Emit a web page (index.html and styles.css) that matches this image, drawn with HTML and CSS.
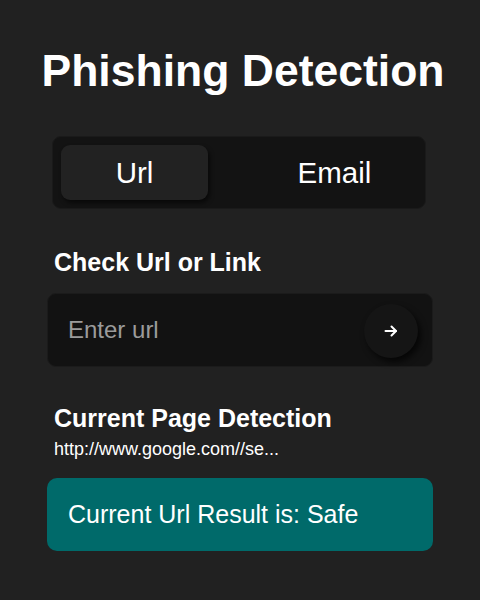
FILE: index.html
```html
<!DOCTYPE html>
<html lang="en">
<head>
<meta charset="utf-8">
<title>Phishing Detection</title>
<link rel="stylesheet" href="styles.css">
</head>
<body>
<main class="app">
  <h1 class="title">Phishing Detection</h1>
  <div class="tabs">
    <button class="tab tab-active">Url</button>
    <button class="tab">Email</button>
  </div>
  <h2 class="heading heading-check">Check Url or Link</h2>
  <div class="input-box">
    <span class="placeholder">Enter url</span>
    <button class="go">
      <svg width="16" height="16" viewBox="0 0 16 16" fill="none" stroke="#fff" stroke-width="2" stroke-linecap="round" stroke-linejoin="round"><path d="M2.5 8h10.5"/><path d="M8.5 3.5 13 8l-4.5 4.5"/></svg>
    </button>
  </div>
  <h2 class="heading heading-current">Current Page Detection</h2>
  <p class="current-url">http://www.google.com//se...</p>
  <div class="result">Current Url Result is: Safe</div>
</main>
</body>
</html>
```
FILE: styles.css
```css
html, body {
  margin: 0;
  padding: 0;
  background: #212121;
}
body {
  font-family: "Liberation Sans", Arial, sans-serif;
  color: #ffffff;
}
.app {
  display: flex;
  flex-direction: column;
  padding: 46px 47px 0 47px;
}
.title {
  margin: 0 -47px 40px -47px;
  font-size: 44.5px;
  line-height: 50px;
  font-weight: 700;
  text-align: center;
  white-space: nowrap;
  padding-left: 6px;
}
.tabs {
  margin: 0 7px 0 5px;
  height: 73px;
  box-sizing: border-box;
  padding: 9px;
  background: #131313;
  border: 1px solid #1a1a1a;
  border-radius: 9px;
  display: flex;
  gap: 53px;
}
.tab {
  width: 147px;
  height: 55px;
  margin-top: -1px;
  border: none;
  background: transparent;
  color: #fff;
  font-family: "Liberation Sans", Arial, sans-serif;
  font-size: 29.5px;
  border-radius: 9px;
  padding: 0;
}
.tab-active {
  background: #222222;
  box-shadow: 2px 3px 4px rgba(0, 0, 0, 0.55);
  margin-left: -1px;
}
.heading {
  margin: 0;
  font-size: 25px;
  line-height: 30px;
  font-weight: 700;
  padding-left: 7px;
}
.heading-check {
  margin-top: 38px;
}
.input-box {
  margin-top: 16px;
  height: 74px;
  box-sizing: border-box;
  background: #121212;
  border: 1px solid #1b1b1b;
  border-radius: 9px;
  display: flex;
  align-items: center;
  justify-content: space-between;
  padding: 0 14px 0 20px;
}
.placeholder {
  font-size: 24px;
  color: #9b9b9b;
}
.go {
  width: 54px;
  height: 54px;
  border-radius: 50%;
  border: none;
  background: #151515;
  box-shadow: 3px 4px 6px rgba(0, 0, 0, 0.7);
  display: flex;
  align-items: center;
  justify-content: center;
  padding: 0;
  margin-top: 2px;
}
.heading-current {
  margin-top: 36px;
}
.current-url {
  margin: 5px 0 0 0;
  padding-left: 7px;
  font-size: 18px;
  line-height: 22px;
}
.result {
  margin-top: 18px;
  height: 73px;
  box-sizing: border-box;
  background: #006a6a;
  border-radius: 10px;
  display: flex;
  align-items: center;
  padding-left: 21px;
  font-size: 25px;
}
```
